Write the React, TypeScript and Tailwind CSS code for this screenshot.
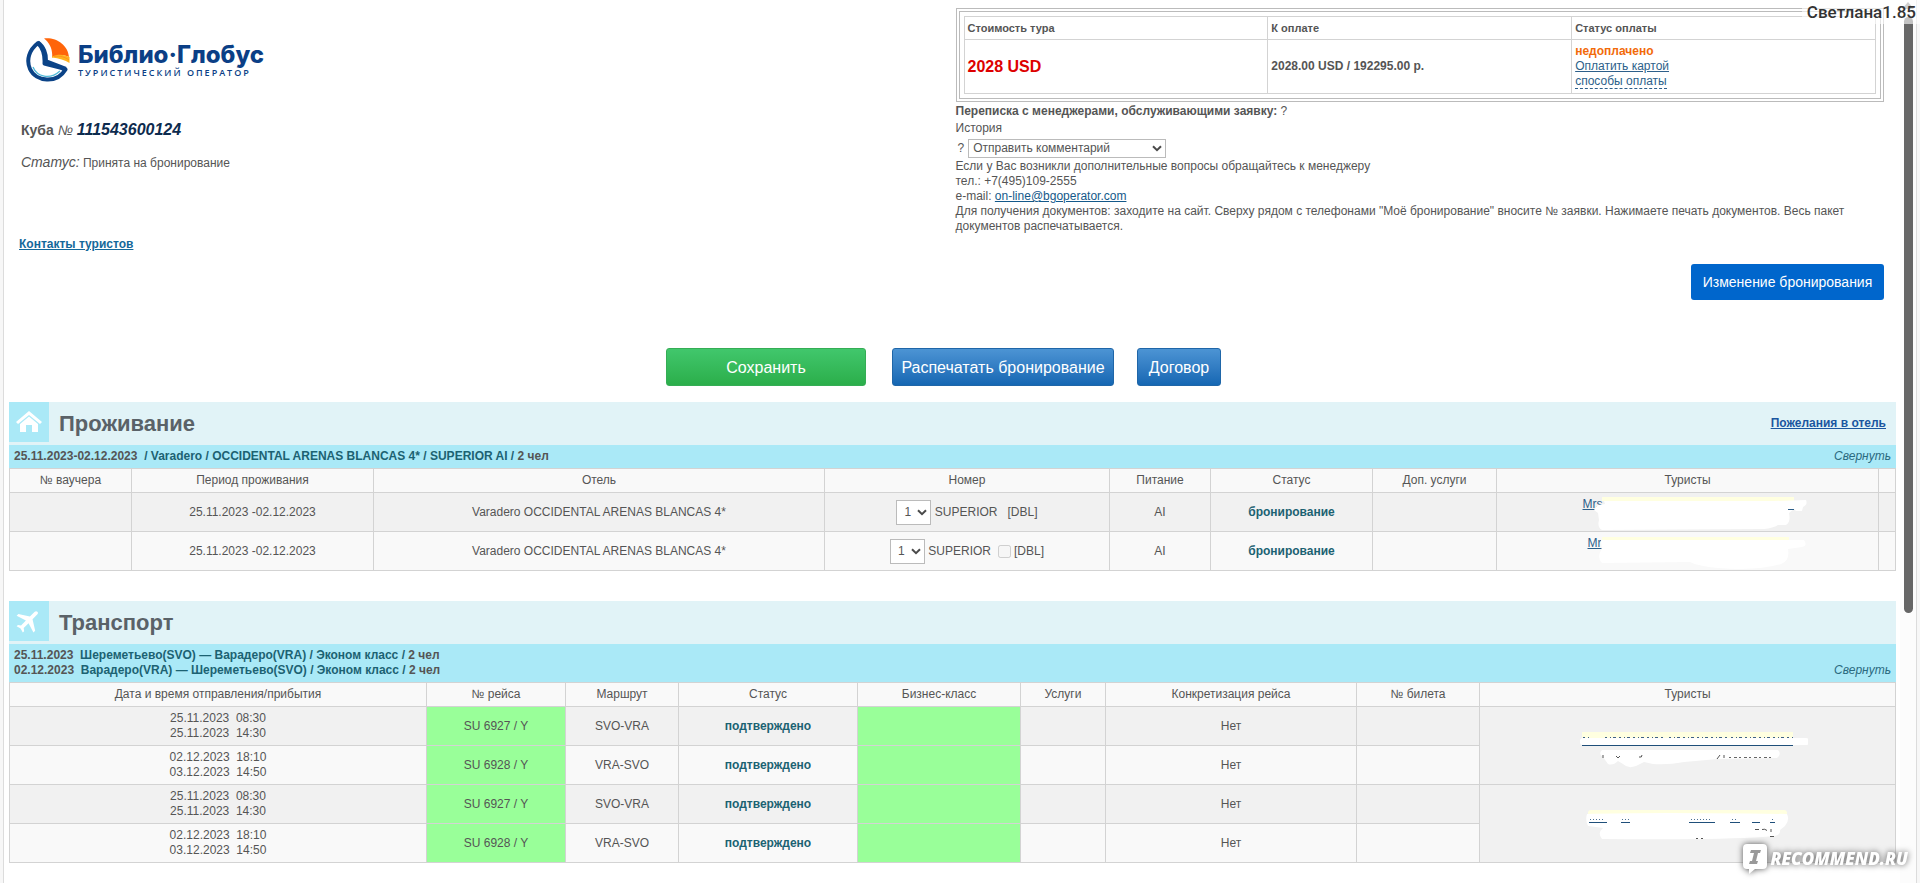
import type { ReactNode } from "react";

const flights = [
  { dep: "25.11.2023  08:30", arr: "25.11.2023  14:30", no: "SU 6927 / Y", route: "SVO-VRA" },
  { dep: "02.12.2023  18:10", arr: "03.12.2023  14:50", no: "SU 6928 / Y", route: "VRA-SVO" },
  { dep: "25.11.2023  08:30", arr: "25.11.2023  14:30", no: "SU 6927 / Y", route: "SVO-VRA" },
  { dep: "02.12.2023  18:10", arr: "03.12.2023  14:50", no: "SU 6928 / Y", route: "VRA-SVO" },
];

const hotelHead = ["№ ваучера", "Период проживания", "Отель", "Номер", "Питание", "Статус", "Доп. услуги", "Туристы", ""];

const flightHead = [
  "Дата и время отправления/прибытия",
  "№ рейса",
  "Маршрут",
  "Статус",
  "Бизнес-класс",
  "Услуги",
  "Конкретизация рейса",
  "№ билета",
  "Туристы",
];

const cell = "border border-[#d3d3d3] p-0";

function Chevron({ className }: { className: string }) {
  return (
    <svg className={className} width="10" height="7" viewBox="0 0 10 7" fill="none" stroke="#4a4a4a" strokeWidth="2">
      <path d="M1 1.2l4 4 4-4" />
    </svg>
  );
}

function Logo() {
  return (
    <div className="flex items-center gap-[7px] text-[#0b3f86]">
      <svg width="45" height="46" viewBox="0 0 45 46">
        <path d="M18 0.5C30-1 42 7 43 19C38 16 31 17 26 19.500C27 12 24 5 18 0.500z" fill="#ff650a" />
        <path d="M26 18.500C32 15.500 39 16.500 43.500 19L43.500 25C39 22 33 20.500 26 19.500z" fill="#ffb21e" />
        <path d="M28 18.500C34 17.500 39 19 43 22" fill="none" stroke="#ff8a1a" strokeWidth="0.800" />
        <path
          d="M12 5C3 12 0 22 4 31C10 44 31 46 39.500 31.500C32 28 26 28 18.500 25.500C19 17 17 10 12 5z"
          fill="#fff"
          stroke="#0b4387"
          strokeWidth="4"
          strokeLinejoin="round"
        />
        <path d="M12 4C18 8 21 16 20.500 23L40 30.500" fill="none" stroke="#0b4387" strokeWidth="3" />
        <path d="M7 29C11 39 24 42 34 33" fill="none" stroke="#4fb9d8" strokeWidth="1.300" />
      </svg>
      <div>
        <div className="font-['Inter'] text-[24px] leading-6 font-extrabold">Библио·Глобус</div>
        <div className="font-['Open_Sans'] text-[9px] leading-3 font-semibold tracking-[2px]">ТУРИСТИЧЕСКИЙ ОПЕРАТОР</div>
      </div>
    </div>
  );
}

function SectionTitle({ icon, title, children }: { icon: ReactNode; title: string; children?: ReactNode }) {
  return (
    <div className="flex h-[43px] items-start bg-[#e1f3f7] pr-2.5">
      <span className="flex size-10 items-center justify-center bg-[#aae9f7]">{icon}</span>
      <h2 className="flex-1 pl-2.5 text-[22px] leading-[43px] font-bold text-[#5a6268]">{title}</h2>
      {children}
    </div>
  );
}

function HeadRow({ titles }: { titles: string[] }) {
  return (
    <thead>
      <tr className="h-6 bg-[#f9f9f9]">
        {titles.map((t, i) => (
          <th key={i} className={`${cell} font-normal`}>
            {t}
          </th>
        ))}
      </tr>
    </thead>
  );
}

function RoomSelect() {
  return (
    <span className="relative inline-flex items-center align-middle">
      <select aria-label="Номер" className="h-[25px] w-[35px] appearance-none border border-[#bbb] bg-white pl-[7px] text-[12px]">
        <option>1</option>
      </select>
      <Chevron className="pointer-events-none absolute right-1" />
    </span>
  );
}

function HotelTourist({ second }: { second?: boolean }) {
  return (
    <div className="relative mx-auto h-9 w-60 text-left leading-5">
      <a href="#" className={second ? "ml-5 text-[#2d5f8a] underline" : "ml-[15px] text-[#2d5f8a] underline"}>
        {second ? "Mr" : "Mrs"}
      </a>
      <svg className="absolute top-0 left-0" width="240" height="38" viewBox="0 0 240 38">
        {second ? (
          <>
            <path d="M34 4H221V8H34z" fill="#ffffe0" />
            <path d="M33 7H236Q240 13 234 14L220 16Q222 28 213 31Q190 38 150 35Q130 33 122 29L34 30Q28 24 34 16z" fill="#fff" />
          </>
        ) : (
          <>
            <path d="M34 3H226V7H34z" fill="#ffffe0" />
            <path d="M36 7L206 7L238 6Q240 11 235 13L234 17H228L226 15L221 19Q223 28 218 31H210Q205 34 196 35L34 36Q29 33 31 26L30 19L26 16L30 11L37 10z" fill="#fff" />
            <path d="M220 15.500h6" fill="none" stroke="#2d5f8a" />
          </>
        )}
      </svg>
    </div>
  );
}

function FlightTourist({ second }: { second?: boolean }) {
  if (second) {
    return (
      <a href="#" aria-label="Турист 2" className="block">
        <svg className="mx-auto block" width="240" height="76" viewBox="0 0 240 76">
          <rect x="20" y="24" width="199" height="8" rx="3" fill="#ffffe0" />
          <path d="M19 28Q80 26 219 28Q222 34 217 40L212 44Q213 49 206 50L195 51Q150 54 34 53Q29 47 35 42L20 40Q17 34 19 28z" fill="#fff" />
          <path d="M21 36.500h18M53 36.500h9M121 36.500h26M162 36.500h10M184 36.500h8M202 36.500h5" stroke="#1f4f7a" />
          <path d="M22 33.500h13M54 33.500h7M123 33.500h21M164 33.500h6M204 33.500h3" stroke="#4d7093" strokeDasharray="1 2" />
          <path d="M187 43.500h4M194 43.500q3-1 5 1M203 43v3M202 50.500h4M128 52.500h2M133 52.500h2" fill="none" stroke="#555" />
        </svg>
      </a>
    );
  }
  return (
    <a href="#" aria-label="Турист 1" className="block">
      <svg className="mx-auto block" width="240" height="76" viewBox="0 0 240 76">
        <rect x="14" y="24" width="211" height="7" fill="#ffffe0" />
        <path d="M15 29.500h8M37 29.500h60M101 29.500h58M163 29.500h62" stroke="#3f6186" strokeDasharray="2 3 1 2 3 3" />
        <rect x="12" y="30" width="229" height="7" rx="3" fill="#fff" />
        <path d="M14 37.500h211" stroke="#1f4f7a" />
        <path d="M34 42H210Q214 46 209 50L150 51L116 54Q100 57 85 56L76 54L68 58Q60 61 55 56L50 53Q45 58 40 56L35 49Q30 46 34 42z" fill="#fff" />
        <path d="M35 47v3M48 48l2 2 2-2M71 49q3 1 3-2M149 51l3-4M156 47v3" fill="none" stroke="#555" />
        <path d="M161 49.500h44" stroke="#666" strokeDasharray="2 3 3 2" />
      </svg>
    </a>
  );
}

export default function App() {
  return (
    <div className="relative flex min-h-screen overflow-hidden bg-[#f7f7f7] pl-[3px] font-['Liberation_Sans',Arial,sans-serif] text-[12px] leading-[15px] text-[#555]">
      <main className="min-w-0 flex-1 border-l border-[#dcdcdc] bg-white pr-1 pl-[5px]">
        <header className="grid grid-cols-2 pt-2">
          <div className="pl-2.5">
            <div className="pt-[30px] pl-[7px]">
              <Logo />
            </div>
            <p className="mt-9 pl-0.5 text-[14px] leading-5">
              <b>Куба</b> <i>№</i> <b className="text-[16px] text-[#0d2b4e] italic">111543600124</b>
            </p>
            <p className="mt-3 pl-0.5 leading-5">
              <i className="text-[14px]">Статус:</i> Принята на бронирование
            </p>
            <p className="mt-16">
              <a href="#" className="font-bold text-[#14689a] underline">
                Контакты туристов
              </a>
            </p>
          </div>

          <div className="pr-3 pl-[3px]">
            <div className="border border-[#bbb] p-0.5">
              <div className="border border-[#bbb] p-1">
                <table className="w-full table-fixed border-collapse text-left">
                  <thead>
                    <tr className="h-[23px] text-[11px]">
                      <th className="border border-[#d3d3d3] px-[3px]">Стоимость тура</th>
                      <th className="border border-[#d3d3d3] px-[3px]">К оплате</th>
                      <th className="border border-[#d3d3d3] px-[3px]">Статус оплаты</th>
                    </tr>
                  </thead>
                  <tbody>
                    <tr className="h-[54px]">
                      <td className="border border-[#d3d3d3] px-[3px] text-[16px] font-bold text-[#d00]">2028 USD</td>
                      <td className="border border-[#d3d3d3] px-[3px] font-bold">2028.00 USD / 192295.00 р.</td>
                      <td className="border border-[#d3d3d3] px-[3px]">
                        <b className="block text-[#f26a0a]">недоплачено</b>
                        <a href="#" className="text-[#2d5f8a] underline">
                          Оплатить картой
                        </a>
                        <br />
                        <a href="#" className="border-b border-dashed border-[#2d5f8a] text-[#2d5f8a]">
                          способы оплаты
                        </a>
                      </td>
                    </tr>
                  </tbody>
                </table>
              </div>
            </div>
            <p className="pt-0.5">
              <b>Переписка с менеджерами, обслуживающими заявку:</b> ?
            </p>
            <p className="pt-0.5">История</p>
            <div className="flex items-center gap-1 pt-[3px] pl-0.5">
              <label htmlFor="comment">?</label>
              <span className="relative flex items-center">
                <select id="comment" className="h-[19px] w-[198px] appearance-none border border-[#bbb] bg-white pl-1 text-[12px]">
                  <option>Отправить комментарий</option>
                </select>
                <Chevron className="pointer-events-none absolute right-1" />
              </span>
            </div>
            <p className="pt-px">
              Если у Вас возникли дополнительные вопросы обращайтесь к менеджеру
              <br />
              тел.: +7(495)109-2555
              <br />
              e-mail:{" "}
              <a href="#" className="text-[#14598a] underline">
                on-line@bgoperator.com
              </a>
              <br />
              Для получения документов: заходите на сайт. Сверху рядом с телефонами "Моё бронирование" вносите № заявки. Нажимаете
              печать документов. Весь пакет документов распечатывается.
            </p>
            <div className="flex justify-end pt-[30px]">
              <button className="h-9 w-[193px] rounded-[3px] bg-[#0066cc] text-[14px] text-white">Изменение бронирования</button>
            </div>
          </div>
        </header>

        <div className="flex justify-center pt-12 pb-4 pr-[18px] text-[16px] text-white">
          <button className="h-[38px] w-[200px] rounded-[3px] border border-[#35ad55] bg-linear-to-b from-[#41c76c] to-[#2bae4a]">
            Сохранить
          </button>
          <button className="ml-[26px] h-[38px] w-[222px] rounded-[3px] border border-[#1f66a8] bg-linear-to-b from-[#4c94d4] to-[#1467b3]">
            Распечатать бронирование
          </button>
          <button className="ml-[23px] h-[38px] w-[84px] rounded-[3px] border border-[#1f66a8] bg-linear-to-b from-[#4c94d4] to-[#1467b3]">
            Договор
          </button>
        </div>

        <section>
          <SectionTitle
            title="Проживание"
            icon={
              <svg width="26" height="22" viewBox="0 0 26 22" fill="#fff">
                <path d="M13 0L0 11l2 2L13 4l11 9 2-2z" />
                <path d="M13 5.500L4 13v8h6v-7h6v7h6v-8z" />
              </svg>
            }
          >
            <a href="#" className="self-center font-bold text-[#1a56a0] underline">
              Пожелания в отель
            </a>
          </SectionTitle>
          <div className="flex items-end justify-between bg-[#aae9f7] px-[5px] py-1 font-bold">
            <p>
              25.11.2023-02.12.2023 &nbsp;
              <a href="#" className="text-[#1c6272]">
                / Varadero / OCCIDENTAL ARENAS BLANCAS 4* / SUPERIOR AI /
              </a>{" "}
              2 чел
            </p>
            <a href="#" className="font-normal text-[#2a6a80] italic">
              Свернуть
            </a>
          </div>
          <table className="w-full table-fixed border-collapse text-center">
            <colgroup>
              <col className="w-[122px]" />
              <col className="w-[242px]" />
              <col />
              <col className="w-[285px]" />
              <col className="w-[101px]" />
              <col className="w-[162px]" />
              <col className="w-[124px]" />
              <col className="w-[382px]" />
              <col className="w-[17px]" />
            </colgroup>
            <HeadRow titles={hotelHead} />
            <tbody>
              {[false, true].map((second) => (
                <tr key={String(second)} className="h-[39px] odd:bg-[#f1f1f1] even:bg-[#f9f9f9]">
                  <td className={cell} />
                  <td className={cell}>25.11.2023 -02.12.2023</td>
                  <td className={cell}>Varadero OCCIDENTAL ARENAS BLANCAS 4*</td>
                  <td className={cell}>
                    <RoomSelect /> SUPERIOR &nbsp;
                    {second && <input type="checkbox" disabled aria-label="DBL" className="size-[13px] align-middle" />} [DBL]
                  </td>
                  <td className={cell}>AI</td>
                  <td className={`${cell} font-bold text-[#1c6272]`}>бронирование</td>
                  <td className={cell} />
                  <td className={cell}>
                    <HotelTourist second={second} />
                  </td>
                  <td className={cell} />
                </tr>
              ))}
            </tbody>
          </table>
        </section>

        <section className="mt-[30px]">
          <SectionTitle
            title="Транспорт"
            icon={
              <svg width="30" height="30" viewBox="0 0 24 24" fill="#fff">
                <path
                  transform="rotate(45 12 12)"
                  d="M21 16v-2l-8-5V3.500c0-.83-.67-1.500-1.500-1.500S10 2.670 10 3.500V9l-8 5v2l8-2.500V19l-2 1.500V22l3.500-1 3.500 1v-1.500L13 19v-5.500l8 2.500z"
                />
              </svg>
            }
          />
          <div className="flex items-end justify-between bg-[#aae9f7] px-[5px] py-1 font-bold">
            <p>
              25.11.2023 &nbsp;
              <a href="#" className="text-[#1c6272]">
                Шереметьево(SVO) — Варадеро(VRA) / Эконом класс /
              </a>{" "}
              2 чел
              <br />
              02.12.2023 &nbsp;
              <a href="#" className="text-[#1c6272]">
                Варадеро(VRA) — Шереметьево(SVO) / Эконом класс /
              </a>{" "}
              2 чел
            </p>
            <a href="#" className="font-normal text-[#2a6a80] italic">
              Свернуть
            </a>
          </div>
          <table className="w-full table-fixed border-collapse text-center">
            <colgroup>
              <col />
              <col className="w-[139px]" />
              <col className="w-[113px]" />
              <col className="w-[179px]" />
              <col className="w-[163px]" />
              <col className="w-[85px]" />
              <col className="w-[251px]" />
              <col className="w-[123px]" />
              <col className="w-[416px]" />
            </colgroup>
            <HeadRow titles={flightHead} />
            <tbody>
              {flights.map((f, i) => (
                <tr key={i} className="h-[39px] odd:bg-[#f1f1f1] even:bg-[#f9f9f9]">
                  <td className={`${cell} whitespace-pre`}>
                    {f.dep}
                    <br />
                    {f.arr}
                  </td>
                  <td className={`${cell} bg-[#99ff99]`}>{f.no}</td>
                  <td className={cell}>{f.route}</td>
                  <td className={`${cell} font-bold text-[#1c6272]`}>подтверждено</td>
                  <td className={`${cell} bg-[#99ff99]`} />
                  <td className={cell} />
                  <td className={cell}>Нет</td>
                  <td className={cell} />
                  {i % 2 === 0 && (
                    <td rowSpan={2} className={`${cell} bg-[#f1f1f1]`}>
                      <FlightTourist second={i === 2} />
                    </td>
                  )}
                </tr>
              ))}
            </tbody>
          </table>
        </section>
      </main>

      {/* scroll track */}
      <div className="flex w-[17px] flex-col items-center border-r border-[#dcdcdc] bg-[#fcfcfc]">
        <svg className="mt-0.5" width="12" height="7" viewBox="0 0 12 7" fill="#888">
          <path d="M6 0l6 7H0z" />
        </svg>
        <div className="mt-2 h-[596px] w-[9px] rounded-full bg-[#666]" />
      </div>
      <div className="w-[3px]" />

      <div className="absolute top-0 right-0 bg-white/60 pr-1 pl-[5px] font-['Roboto'] text-[17px] leading-6 font-medium text-[#333]">
        Светлана1.85
      </div>

      <div className="absolute right-3 bottom-2 flex items-center gap-0.5 text-white drop-shadow-[0_0_3px_#555]">
        <svg width="26" height="32" viewBox="0 0 26 32">
          <path d="M5 1h16q4 0 4 4v17q0 4-4 4h-8l-6 5v-5H5q-4 0-4-4V5q0-4 4-4z" fill="#fff" />
          <path d="M9 7h10l-1 3h-2l-2 8h2l-1 3H7l1-3h2l2-8H8z" fill="#999" />
        </svg>
        <span className="font-['Open_Sans'] text-[17px] leading-6 font-extrabold italic">RECOMMEND.RU</span>
      </div>
    </div>
  );
}
